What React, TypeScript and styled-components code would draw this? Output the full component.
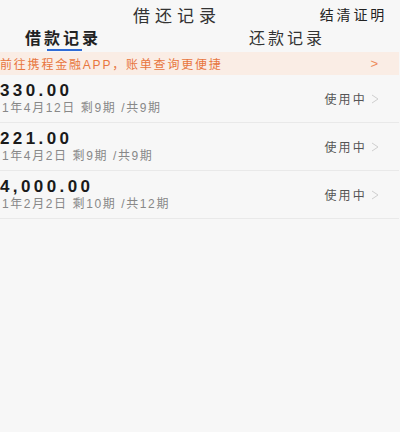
import styled, { createGlobalStyle } from "styled-components";

const GlobalStyle = createGlobalStyle`
  html, body {
    margin: 0;
    padding: 0;
    background: #f7f7f7;
    overflow: hidden;
  }
  * { box-sizing: border-box; }
`;

const FONT = `"Liberation Sans", "Noto Sans CJK SC", sans-serif`;

interface LoanItem {
  amount: string;
  date: string;
  left: number;
  total: number;
}

// the screen is cropped on its left side: only what shows is kept
const loans: LoanItem[] = [
  { amount: "330.00", date: "1年4月12日", left: 9, total: 9 },
  { amount: "221.00", date: "1年4月2日", left: 9, total: 9 },
  { amount: "4,000.00", date: "1年2月2日", left: 10, total: 12 },
];

const Chevron = ({ color }: { color: string }) => (
  <svg width="8" height="10" viewBox="0 0 8 10" fill="none">
    <path d="M1 1l6 4-6 4" stroke={color} strokeWidth="1" />
  </svg>
);

export default function App() {
  return (
    <Page>
      <GlobalStyle />
      <Header>
        <span />
        <Title>借还记录</Title>
        <HeaderLink>结清证明</HeaderLink>
      </Header>
      <Tabs>
        <Tab $active>借款记录</Tab>
        <Tab>还款记录</Tab>
      </Tabs>
      <Banner>
        <span>前往携程金融APP，账单查询更便捷</span>
        <BannerArrow>&gt;</BannerArrow>
      </Banner>
      {loans.map((item, index) => (
        <Row key={index}>
          <Info>
            <Amount>{item.amount}</Amount>
            <Meta>
              {item.date} 剩{item.left}期 /共{item.total}期
            </Meta>
          </Info>
          <Status>
            使用中
            <Chevron color="#cfcfcf" />
          </Status>
        </Row>
      ))}
    </Page>
  );
}

const Page = styled.div`
  width: 448px;
  margin-left: -49px;
  font-family: ${FONT};
  color: #222;
`;

const Header = styled.div`
  height: 28px;
  display: grid;
  grid-template-columns: 1fr auto 1fr;
  align-items: center;
  padding: 0 14px;
`;

const Title = styled.div`
  font-size: 17px;
  letter-spacing: 5px;
  margin-right: -4px;
  color: #333;
`;

const HeaderLink = styled.div`
  justify-self: end;
  font-size: 14px;
  letter-spacing: 2.8px;
  margin-right: -2px;
  color: #222;
`;

const Tabs = styled.div`
  height: 24px;
  display: grid;
  grid-template-columns: 1fr 1fr;
`;

const Tab = styled.div<{ $active?: boolean }>`
  position: relative;
  text-align: center;
  font-size: 16px;
  line-height: 20px;
  padding-top: 1px;
  letter-spacing: 3px;
  font-weight: ${(p) => (p.$active ? 700 : 400)};
  color: ${(p) => (p.$active ? "#222" : "#333")};

  &::after {
    content: "";
    display: ${(p) => (p.$active ? "block" : "none")};
    position: absolute;
    left: 50%;
    bottom: 1px;
    width: 35px;
    height: 2px;
    margin-left: -16px;
    background: #2f6bd6;
  }
`;

const Banner = styled.div`
  height: 23px;
  display: flex;
  align-items: center;
  justify-content: space-between;
  padding: 0 19px 0 49px;
  background: #faede5;
  color: #e8763e;
  font-size: 12px;
  letter-spacing: 1.8px;
`;

const BannerArrow = styled.span`
  font-size: 13px;
  color: #ee8a5a;
`;

const Row = styled.div`
  height: 48px;
  display: flex;
  align-items: center;
  justify-content: space-between;
  padding: 0 20px 0 49px;
  border-bottom: 1px solid #e9e9e9;
`;

const Info = styled.div`
  display: flex;
  flex-direction: column;
  padding-bottom: 1px;
`;

const Amount = styled.div`
  font-size: 17px;
  line-height: 17px;
  font-weight: 700;
  letter-spacing: 3.4px;
  color: #1a1a1a;
`;

const Meta = styled.div`
  margin-top: 3px;
  padding-left: 2px;
  font-size: 12px;
  line-height: 13px;
  letter-spacing: 1.6px;
  color: #888;
`;

const Status = styled.div`
  display: flex;
  align-items: center;
  gap: 4px;
  font-size: 12px;
  letter-spacing: 2.2px;
  color: #555;
`;
